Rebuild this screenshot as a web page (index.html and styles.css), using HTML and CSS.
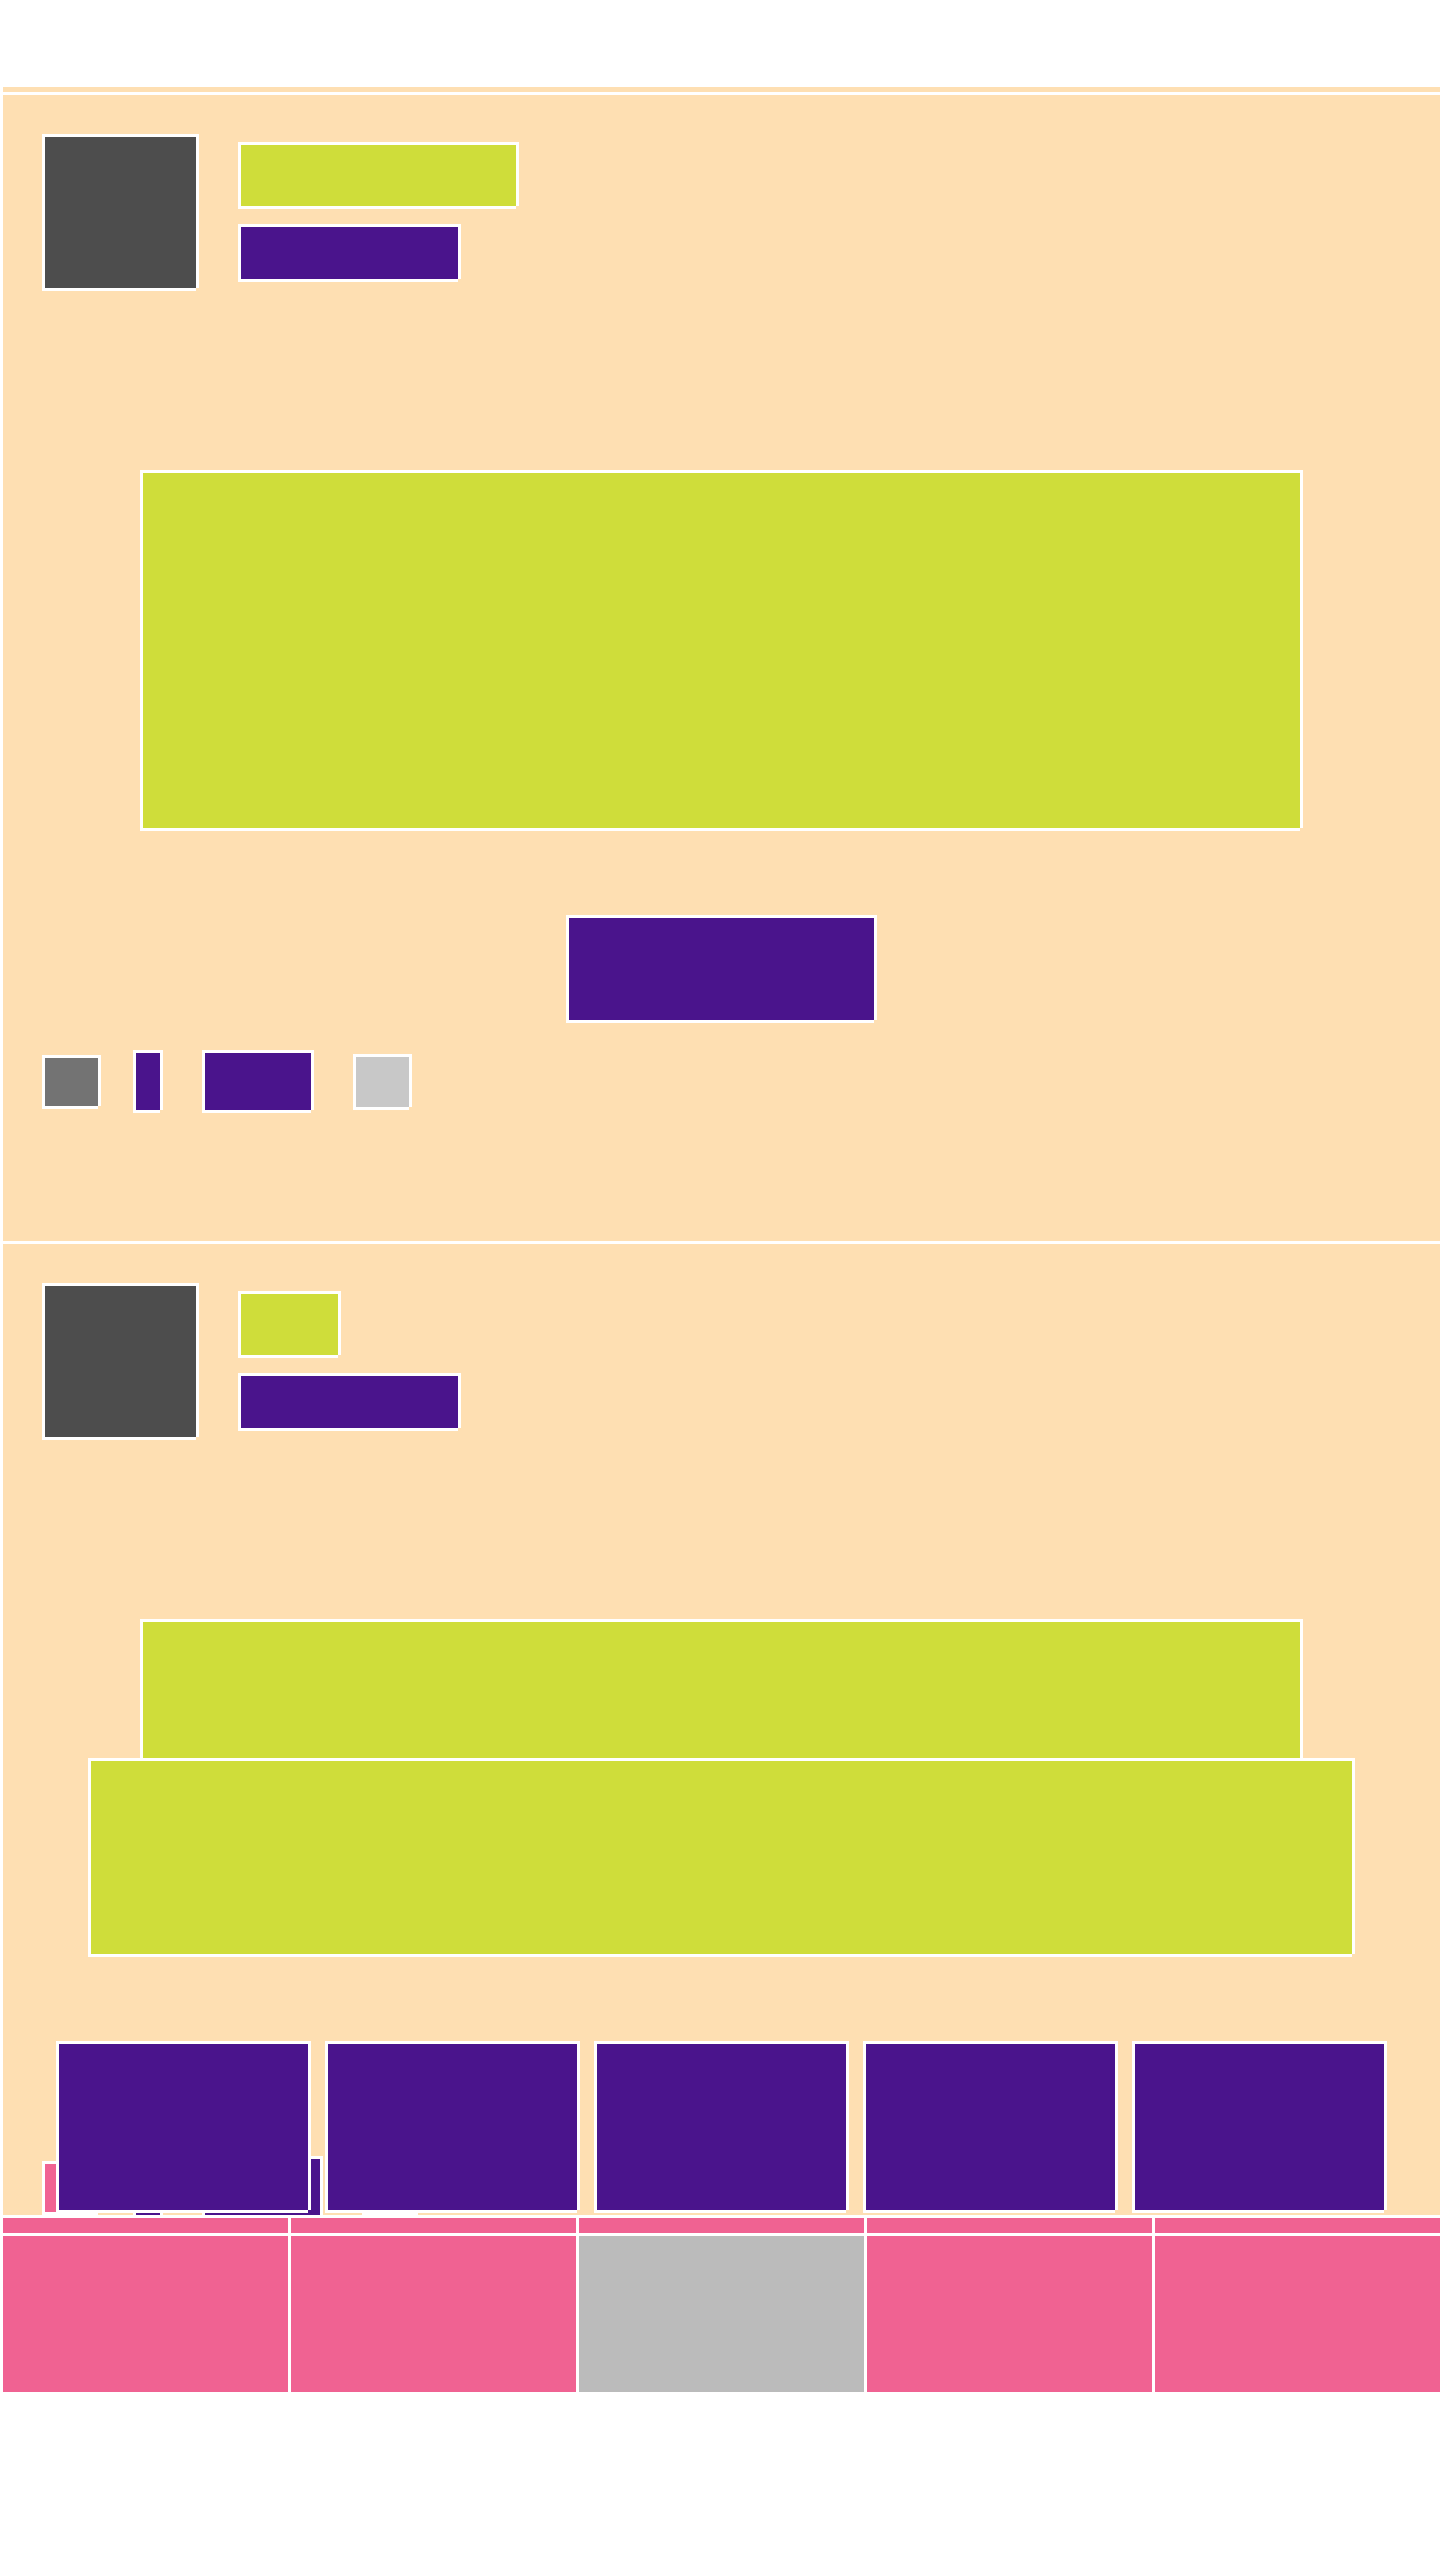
FILE: index.html
```html
<!DOCTYPE html>
<html lang="en">
<head>
<meta charset="utf-8">
<title>Feed</title>
<link rel="stylesheet" href="styles.css">
</head>
<body>
<div class="page">
  <header class="topbar f"></header>

  <section class="post f">
    <div class="head">
      <div class="avatar f"></div>
      <div class="titles">
        <div class="name f"></div>
        <div class="handle f"></div>
      </div>
    </div>
    <div class="media f"></div>
    <div class="action f"></div>
    <div class="meta">
      <span class="m-icon gray f"></span>
      <span class="m-narrow f"></span>
      <span class="m-wide f"></span>
      <span class="m-icon light f"></span>
    </div>
  </section>

  <section class="post post-clip f">
    <div class="head">
      <div class="avatar f"></div>
      <div class="titles">
        <div class="name short f"></div>
        <div class="handle f"></div>
      </div>
    </div>
    <div class="media media-short f"></div>
    <div class="wide f"></div>
    <div class="meta meta-low">
      <span class="m-icon pink f"></span>
      <span class="m-narrow f"></span>
      <span class="m-wide m-wider f"></span>
      <span class="m-icon light f"></span>
    </div>
    <div class="tiles">
      <div class="tile f"></div>
      <div class="tile f"></div>
      <div class="tile f"></div>
      <div class="tile f"></div>
      <div class="tile f"></div>
    </div>
  </section>

  <nav class="tabs">
    <div class="tab f"><div class="strip"></div><div class="cell"></div></div>
    <div class="tab f"><div class="strip"></div><div class="cell"></div></div>
    <div class="tab f"><div class="strip"></div><div class="cell active"></div></div>
    <div class="tab f"><div class="strip"></div><div class="cell"></div></div>
    <div class="tab f"><div class="strip"></div><div class="cell"></div></div>
  </nav>
</div>
</body>
</html>
```

FILE: styles.css
```css
* {
  box-sizing: border-box;
}

body {
  margin: 0;
  background: #ffffff;
  font-family: "Liberation Sans", Arial, sans-serif;
}

/* white frame: top/left border + right/bottom offset strips */
.f {
  border-top: 3px solid #ffffff;
  border-left: 3px solid #ffffff;
  box-shadow: 3px 0 0 #ffffff, 0 3px 0 #ffffff;
}

.page {
  width: 1440px;
  padding-top: 84px;
}

.topbar {
  height: 8px;
  background: #fedfb2;
}

.post {
  background: #fedfb2;
  height: 1149px;
}

.post-clip {
  position: relative;
  height: 974px;
  overflow: hidden;
}

.head {
  display: flex;
  align-items: flex-start;
  padding: 39px 0 0 39px;
}

.avatar {
  width: 154px;
  height: 154px;
  background: #4d4d4d;
}

.titles {
  display: flex;
  flex-direction: column;
  margin: 8px 0 0 42px;
}

.name {
  width: 278px;
  height: 64px;
  background: #cfdd3a;
}

.name.short {
  width: 100px;
}

.handle {
  width: 220px;
  height: 55px;
  margin-top: 18px;
  background: #4a148c;
}

.media {
  width: 1160px;
  height: 358px;
  margin: 182px 0 0 137px;
  background: #cfdd3a;
}

.media-short {
  height: 139px;
}

.wide {
  width: 1264px;
  height: 196px;
  margin-left: 85px;
  background: #cfdd3a;
}

.action {
  width: 308px;
  height: 105px;
  margin: 87px 0 0 563px;
  background: #4a148c;
}

.meta {
  display: flex;
  align-items: center;
  height: 60px;
  margin-top: 30px;
  padding-left: 39px;
}

.meta-low {
  margin-top: 202px;
}

.m-icon {
  width: 56px;
  height: 51px;
}

.m-icon.gray {
  background: #737373;
}

.m-icon.pink {
  background: #f06292;
}

.m-icon.light {
  height: 53px;
  margin-left: 42px;
  background: #c8c8c8;
}

.m-narrow {
  width: 27px;
  height: 60px;
  margin-left: 35px;
  background: #4a148c;
}

.m-wide {
  width: 109px;
  height: 60px;
  margin-left: 42px;
  background: #4a148c;
}

.m-wider {
  width: 118px;
}

.tiles {
  position: absolute;
  top: 797px;
  left: 53px;
  display: flex;
  gap: 17px;
}

.tile {
  width: 252px;
  height: 169px;
  background: #4a148c;
}

.tabs {
  display: flex;
}

.tab {
  width: 288px;
  background: #f06292;
}

.strip {
  height: 15px;
}

.cell {
  height: 159px;
  border-top: 3px solid #ffffff;
  background: #f06292;
}

.cell.active {
  background: #bbbbbb;
}
```
